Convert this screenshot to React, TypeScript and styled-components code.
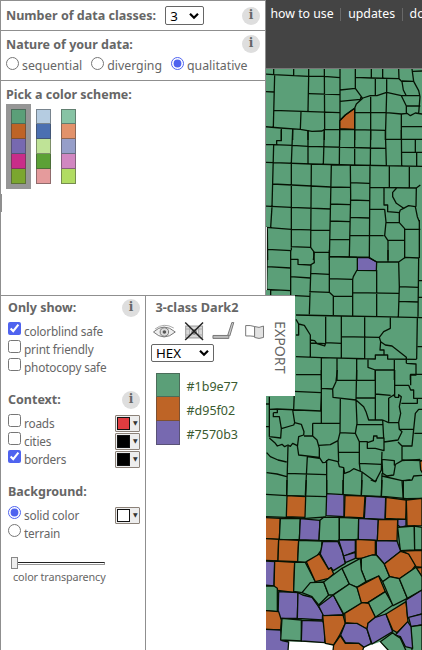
import React from "react";
import styled, { createGlobalStyle } from "styled-components";

const Global = createGlobalStyle`
  * { box-sizing: border-box; }
  body { margin: 0; background: #fff; overflow: hidden; }
`;

const Page = styled.div`
  display: grid;
  grid-template-columns: 266px 156px;
  width: 422px;
  height: 650px;
  overflow: hidden;
  font: 13px/18px "Noto Sans", sans-serif;
  color: #666;
`;

const Sidebar = styled.div`
  display: grid;
  grid-template-columns: 266px;
  grid-template-rows: 30px 50px 215px 355px;
  width: 266px;
  position: relative;
  z-index: 1;
`;

const Panel = styled.section<{ $pad: string }>`
  border: 1px solid #8f8f8f;
  border-bottom: 0;
  background: #fff;
  padding: ${(p) => p.$pad};
`;

const Heading = styled.h2<{ $size?: number }>`
  margin: 0;
  font-size: ${(p) => p.$size ?? 12.5}px;
  line-height: 18px;
  font-weight: 700;
  white-space: nowrap;
`;

const PanelHeading = styled(Heading)`
  line-height: 20px;
`;

const Bar = styled.div<{ $h?: number }>`
  display: flex;
  align-items: center;
  justify-content: space-between;
  height: ${(p) => p.$h ?? 18}px;
`;

const HeadingBar = styled(Bar)`
  align-items: flex-start;
`;

const Inline = styled.div`
  display: flex;
  align-items: center;
  gap: 9px;
`;

const Info = styled.span`
  flex: none;
  width: 18px;
  height: 18px;
  border-radius: 50%;
  background: #dedede;
  color: #666;
  font: bold 12px/17px "DejaVu Serif", serif;
  text-align: center;
`;

const SelectBox = styled.div<{ $w: number; $h: number }>`
  display: flex;
  align-items: center;
  justify-content: space-between;
  width: ${(p) => p.$w}px;
  height: ${(p) => p.$h}px;
  padding: 0 3px 0 4px;
  border: 1px solid #666;
  border-radius: 2px;
  background: #fff;
  color: #000;
  font-size: 13.3px;
`;

const Option = styled.label<{ $mr?: number }>`
  display: flex;
  align-items: flex-start;
  gap: 3px;
  height: 18px;
  margin-right: ${(p) => p.$mr ?? 0}px;
  white-space: nowrap;
`;

const Control = styled.input`
  flex: none;
  width: 13px;
  height: 13px;
  margin: 0;
  accent-color: #4f63ef;
`;

const OptionText = styled.span`
  font-size: 11.8px;
  line-height: 18px;
  letter-spacing: -0.18px;
`;

const NatureText = styled.span`
  font-size: 12.3px;
  line-height: 18px;
`;

const Natures = styled.div`
  display: flex;
  margin-top: 4px;
`;

const Ramps = styled.div`
  display: flex;
  margin-top: -1px;
`;

const Ramp = styled.div<{ $selected?: boolean }>`
  width: 25px;
  height: 85px;
  padding: 5px;
  background: ${(p) => (p.$selected ? "#969696" : "transparent")};
`;

const Swatch = styled.div<{ $c: string; $w: number; $h: number }>`
  width: ${(p) => p.$w}px;
  height: ${(p) => p.$h}px;
  background: ${(p) => p.$c};
  border: 1px solid rgba(60, 60, 60, 0.5);
  & + & { border-top: 0; }
`;

const Lower = styled.div`
  display: grid;
  grid-template-columns: 145px 121px;
  border-top: 1px solid #8f8f8f;
`;

const Options = styled.div`
  background: #fff;
  border-left: 1px solid #8f8f8f;
  padding: 3px 5px 0 7px;
  ${Heading} { line-height: 17px; padding-bottom: 1px; }
`;

const Group = styled.div<{ $top: number }>`
  padding-top: ${(p) => p.$top}px;
`;

const Picker = styled.span`
  display: flex;
  align-items: center;
  gap: 3px;
  width: 25px;
  height: 17px;
  padding-left: 1px;
  border: 1px solid #8b8178;
  border-radius: 1px;
  background: #ededed;
  color: #333;
  font: 6px/14px "DejaVu Sans", sans-serif;
`;

const PickerColor = styled.span<{ $c: string }>`
  width: 13px;
  height: 13px;
  border: 1px solid #111;
  background: ${(p) => p.$c};
`;

const Slider = styled.div`
  display: flex;
  align-items: center;
  width: 94px;
  height: 12px;
  margin: 15px 0 0 3px;
`;
const Thumb = styled.span`
  width: 7px;
  height: 12px;
  border: 1px solid #888;
  background: #eee;
`;
const Track = styled.span`
  flex: 1;
  height: 3px;
  border: 1px solid #999;
  border-top-color: #222;
  border-left: 0;
`;
const Caption = styled.div`
  margin: 0 0 0 5px;
  font-size: 10.8px;
  letter-spacing: -0.12px;
  line-height: 16px;
  white-space: nowrap;
`;

const Scheme = styled.div`
  position: relative;
  background: #fff;
  border-left: 1px solid #8f8f8f;
  padding: 2px 0 0 5px;
`;

const SchemeTitle = styled(Heading)`
  padding-left: 4.5px;
`;

const Tools = styled.div`
  display: flex;
  align-items: center;
  height: 26px;
  margin-top: 2px;
`;

const Codes = styled.div`
  display: grid;
  grid-template-columns: 24px 1fr;
  column-gap: 6.5px;
  margin: 11px 0 0 5px;
  color: #3b5b31;
  font-size: 12.5px;
  line-height: 24px;
`;
const SwatchColumn = styled.div``;
const CodeColumn = styled.div`
  padding-top: 2px;
`;

const ExportTab = styled.div`
  position: absolute;
  left: 119px;
  top: -1px;
  display: flex;
  align-items: center;
  justify-content: center;
  width: 30px;
  height: 101px;
  padding-top: 2px;
  background: #fff;
  border-top: 1px solid #8f8f8f;
`;
const ExportText = styled.span`
  writing-mode: vertical-rl;
  font-size: 14.2px;
  line-height: 18px;
`;

const Edge = styled.span`
  position: absolute;
  left: 0;
  top: 194px;
  width: 2px;
  height: 18px;
  background: #8f8f8f;
`;

const Main = styled.div`
  display: grid;
  grid-template-rows: 69px 581px;
  min-width: 0;
`;

const Nav = styled.nav`
  display: flex;
  align-items: flex-start;
  padding: 4px 0 0 4.5px;
  background: #444;
  border-bottom: 1px solid #777;
  color: #fff;
  overflow: hidden;
`;
const NavItem = styled.span`
  flex: none;
  font-size: 12.3px;
  line-height: 20px;
  padding-right: 7.5px;
  margin-right: 7px;
  background: linear-gradient(#686868, #686868) right 4px / 1px 13px no-repeat;
`;

const MapView = styled.svg`
  display: block;
  width: 156px;
  height: 581px;
`;

const Chevron = () => (
  <svg width="12" height="8" viewBox="0 0 12 8">
    <path d="M2 1.8 6 5.8 10 1.8" fill="none" stroke="#000" strokeWidth="2.2" />
  </svg>
);

const G = "#5b9f78";
const O = "#be6426";
const P = "#7769b0";

const topLines =
  "M10 222L35 224L140 229H187L234 233M35 207V224M95 207V226M140 207V229M187 207L188 390M234 207V362M38 224L34 382M10 275L36 276M140 229L138 333M141 281L234 284M34 331L233 338M117 335L115 388M10 380L55 384L115 388L150 394L180 393L188 388L278 389L370 391M280 207V265M280 232L328 234L410 236M328 207V232M362 207V234M340 235V286M374 236V278M410 207L411 236L420 245L424 270L432 286M420 243L455 244M450 207L455 244L470 272L474 290L470 340M453 214L480 213M234 270L280 265L298 290L302 296M234 304L295 298L297 291M233 362L250 345L278 325L283 312L303 294L325 287H345L374 277L418 287L433 318V340M418 287H472M433 318H475M374 338L418 342L435 340L445 347L460 339L480 342M278 325V389M326 290V391M374 278L370 420M278 338H374M418 342V420M420 380H480M58 385V420M92 388V420M138 392V420M187 388V420M233 362V420M278 389V420M326 391V420";
const upperLines =
  "M58 0V32H44V44M10 44H35L92 46L138 49L326 54L372 55M92 0L88 100M138 0V102M187 0L184 103M233 0L232 103M278 0V105M326 0L325 105M370 0L373 106M10 97L35 98L148 102L265 105L480 109M35 44L30 230L26 293M88 100V360M148 102L146 352M208 104L202 390M265 105L266 200L262 380M324 105L322 385M382 107V172M442 109V172M32 162L206 171L265 172M265 158L322 160M322 172L463 174L475 165M10 228L88 232L206 237M205 222L265 224M265 210L322 212M205 273L264 275M264 262L322 264M10 292L88 298L204 301M202 328L262 329M262 316L365 317M322 238H368M366 174V225H377V245L412 248L415 240L425 235M404 174L392 187V200L403 220L425 235L430 232L440 227L460 230L466 260L472 275M463 174L462 230M368 238L372 276L368 317L378 332V390M372 278H412L428 296V385M412 248V278M428 298H475M378 331H428M472 270V384M372 28H480M418 0L419 107M460 29V67M418 67H480M464 67V107M16 293L17 390M16 358L88 362M86 350L146 352L157 367L154 390M157 367H202M202 380L285 382";
const middleLines =
  "M16 0L14 118M16 50L86 54M86 0V136M86 28H108V43L145 45L157 38L155 5M147 45L142 193M86 80L145 84M145 70L202 73M202 0V125M202 19L320 22L344 36H410L430 22L472 24M202 86L272 88L274 80L285 60M10 118L86 122V136L142 139M142 125L202 127L214 138V195M214 139H272M272 88V197M272 128L410 130M344 60V198M410 36L412 110L409 200M412 110L470 112M409 154L470 156M470 24L468 200M378 0V34M470 92H480M470 142H480M26 120V140M102 195L240 198L350 200L480 203M102 208L110 222L127 226L145 255V320M110 222V255H102M145 270L158 272L165 281L188 288L191 280V197M191 278L238 280M145 279L190 281M238 198V325M238 260L352 262M308 200V325M385 200V235L365 245L352 262L356 275L370 285L390 288L433 322V340M356 275L354 300H366V314M466 203L464 327M467 290H480M102 320L178 323L340 327V315H377V327L464 328M178 323V390M225 325V390M284 327V390M318 327V352L340 360H397M340 360V390M397 330V390M433 340L462 342V375H445V390M102 374H178";
const lowerLines =
  "M178 0V160M178 55L212 57L222 35L226 0M222 31H340M284 0L282 90M212 57L213 82L282 90L305 110L312 125L320 150H362M282 84H340M340 0V150M340 72L386 76M95 64L178 68M97 68L95 118M22 80V200M22 118L45 117L176 123L178 68M34 128H46V117M34 128V140H52L58 176L95 165L98 158L92 120M10 102H22M10 170H20M98 158L118 163L126 185L125 195L110 200L106 232M58 176L56 204L22 200M152 160H235M152 160V198H126M235 84L234 188L280 190L285 160L282 90M285 163L362 164M170 226L205 224L228 212L234 188M280 190L292 215V280L295 305M22 204L40 220L46 228L60 223L68 230L78 225L85 229L92 220L106 227M152 198L165 210L172 235V262L110 255L106 227M172 262L182 278L190 277L200 268L228 275L232 290L245 293L248 310L262 305L275 296L300 306L340 335L358 300L360 245M228 212L230 275M228 247H292M292 215H316V235H340L366 242V204H345V198H335L334 212L316 218M362 150L365 204M362 150L380 158L410 157L412 178L420 185L408 210L366 216M292 280L358 283M380 155V85L395 75L400 82L410 82V74L418 80L412 110L416 130L410 157M398 0V80M398 46H440L446 60H455V85H466V100H418M446 13V46M445 13H480M466 85H480M412 178H455L460 130L470 118H480M455 178L450 228H420L408 216M420 230V270M360 268L397 272V285L420 272L475 268M360 268L362 310L375 318L395 315L400 285M457 190H480M14 248L25 260L48 270L74 276M78 228L74 375M14 308L45 312L74 320M74 310L194 314M136 260L130 375M136 260L172 265M194 270V372M245 293L243 375M300 306L298 378M360 310L358 382M360 318L420 332L424 385M420 332L450 330L455 318L480 316M422 270L480 272";
const bottomLines =
  "M10 43L75 47L194 50M10 110L73 112L131 115L192 111M75 0L74 47M133 0L131 50M194 0V45M243 0V44M300 0L298 47M360 0L358 50M424 0V53M246 44L309 48L371 50L433 56L480 55M326 0L340 5L344 0M430 2L445 0";

const parcels: [string, string][] = [
  [O, "75,47 131,50 129,112 73,110"],
  [P, "194,41 246,44 246,110 192,107"],
  [O, "249,46 309,48 305,114 247,111"],
  [P, "311,48 371,52 369,118 307,115"],
  [O, "372,52 433,60 431,118 370,115"],
  [O, "433,60 480,55 480,137 435,138"],
  [P, "407,118 432,118 432,138 415,142 407,135"],
  [O, "10,113 55,115 52,178 10,176"],
  [G, "55,115 115,116 112,179 52,178"],
  [P, "115,116 174,121 171,181 112,179"],
  [G, "174,121 185,112 232,112 232,183 171,181"],
  [G, "232,112 290,115 289,178 232,180"],
  [P, "290,115 349,119 346,181 289,178"],
  [O, "349,119 407,119 405,183 346,181"],
  [G, "407,142 457,138 458,210 415,212"],
  [G, "457,138 480,142 480,210 458,210"],
  [O, "10,176 50,178 48,243 10,241"],
  [O, "50,178 110,181 107,245 48,243"],
  [G, "110,181 180,183 178,210 160,235 130,247 107,245"],
  [P, "182,185 228,185 240,212 250,250 214,272 207,263 200,268 175,222"],
  [P, "230,180 280,180 280,215 245,228"],
  [P, "245,228 280,217 280,235 250,248"],
  [O, "282,178 340,181 340,225 325,227 300,235 282,235"],
  [P, "343,182 405,183 416,214 367,252 343,225"],
  [G, "298,235 330,225 343,225 367,252 383,290 362,305 350,288 312,305 298,270"],
  [O, "367,252 416,214 440,222 462,255 450,270 412,296 383,290"],
  [O, "420,213 480,211 480,262 462,260 440,222"],
  [O, "462,264 480,262 480,290"],
  [P, "10,243 38,245 36,318 10,315"],
  [O, "38,243 98,247 95,337 36,330"],
  [G, "98,247 130,247 160,305 140,322 120,338 95,334"],
  [O, "133,245 172,222 200,268 207,263 215,282 200,295 160,305"],
  [G, "10,318 36,318 46,325 46,395 10,392"],
  [P, "50,335 108,338 106,415 48,415"],
  [P, "108,338 122,345 150,352 168,378 182,400 181,420 106,415"],
  [G, "120,338 145,308 185,306 200,345 170,375 150,350"],
  [G, "185,306 240,265 262,312 212,345 200,345"],
  [G, "240,265 295,235 298,270 312,305 285,322 262,312"],
  [P, "170,378 214,345 245,405 185,408"],
  [G, "214,345 262,312 285,322 300,370 245,402"],
  [O, "285,322 350,288 370,335 318,368 298,368"],
  [G, "318,368 370,335 393,375 340,412"],
  [G, "362,305 383,290 412,296 436,355 393,377"],
  [G, "412,296 462,262 480,290 480,330 436,355"],
  [O, "10,392 50,395 58,420 56,450 10,448"],
  [P, "10,448 56,450 60,482 80,486 78,512 10,512"],
  [G, "60,415 118,420 118,483 56,480"],
  [P, "120,421 182,423 190,440 188,488 118,483"],
  [O, "182,407 243,405 250,430 232,467 215,495 190,490"],
  [O, "248,400 300,368 320,370 340,412 318,430 315,447 285,432 250,428"],
  [P, "250,430 285,430 315,447 328,490 305,502 290,490 250,488 236,465"],
  [P, "315,447 318,430 340,412 372,402 392,455 330,492"],
  [O, "372,402 432,365 438,425 405,458 392,450"],
  [P, "432,360 480,330 480,402 445,412 437,415"],
  [P, "440,412 480,402 480,435 447,440"],
  [G, "447,440 480,435 480,512 450,512"],
  [P, "400,465 437,425 447,440 452,505 430,500 415,470"],
  [G, "355,485 392,458 400,465 415,475 432,512 380,512"],
  [O, "215,495 235,467 250,490 290,490 305,502 302,512 213,512"],
];

const CountyMap = () => (
  <MapView viewBox="266 69 156 581">
    <path d="M266 69H422V650H266Z" fill={G} />
    <g stroke="#051203" strokeWidth="3.9" fill="none" strokeLinejoin="round">
      <g transform="translate(262 0) scale(.33333)">
        <path d="M233 362L250 345L278 325V388L233 386Z" fill={O} />
        <path d={topLines} />
      </g>
      <path transform="translate(262 130) scale(.33333)" d={upperLines} />
      <g transform="translate(262 250) scale(.33333)">
        <path d="M286 23L320 22L344 36L343 62L286 61Z" fill={P} />
        <path d={middleLines} />
      </g>
      <g transform="translate(262 370) scale(.33333)">
        <path d={lowerLines} />
        <path d="M474 275L482 270V310L476 300Z" fill={O} />
      </g>
      <g transform="translate(262 480) scale(.33333)">
        <path d={bottomLines} />
        <path
          d="M78 484L188 488L215 497V514H78ZM302 503L355 485L380 514H302Z"
          fill="#fff"
          stroke="none"
        />
        {parcels.map(([fill, points]) => (
          <polygon key={points} points={points} fill={fill} />
        ))}
      </g>
    </g>
    <path d="M266.5 227V290" stroke="#ddd" strokeWidth="1" />
  </MapView>
);

const ToolIcons = () => (
  <svg width="116" height="26" viewBox="151 317 116 26" fill="none" stroke="#777">
    <path d="M153.500 331Q164 321 175.500 331Q164 341 153.500 331Z" fill="#eee" />
    <path d="M155 328Q164 321 174 327" stroke="#aaa" />
    <circle cx="164.500" cy="331" r="4.300" fill="#ddd" />
    <circle cx="164.500" cy="331" r="1.800" fill="#555" stroke="none" />
    <rect x="186" y="325" width="17" height="12" fill="#d8d8d8" stroke="#999" />
    <path d="M186 328h17M186 334h17M190 325v12M199 325v12" stroke="#aaa" />
    <circle cx="194.500" cy="331" r="3.500" fill="#888" stroke="#eee" />
    <path d="M185.500 321.500L203.500 339M203.500 321.500L185.500 339" stroke="#222" strokeWidth="1.500" />
    <path d="M213.500 334.500H229.500V337.500H213.500Z" fill="#bbb" />
    <path d="M228.500 334L232.500 321.500H234.500L230.500 335Z" fill="#ccc" />
    <path d="M246.500 324.500H251L255.500 325.500V335.500L251 335H246.500Z" fill="#fff" />
    <path d="M255.500 325.500Q260 327.500 264.500 325V336.500Q260 338.500 255.500 336.500Z" fill="#e2e2e2" />
  </svg>
);

const ramps = [
  ["#5b9f78", "#be6426", "#7769b0", "#c92d89", "#7ba62f"],
  ["#b5cce1", "#4b70b1", "#bfe397", "#5ca136", "#e59b9c"],
  ["#87c3a4", "#e2926b", "#969ec9", "#d187c1", "#b1dc62"],
];

export default function App() {
  return (
    <Page>
      <Global />
      <Sidebar>
        <Edge />
        <Panel $pad="5px 5px 0">
          <Bar $h={19}>
            <Inline>
              <Heading $size={12.55}>Number of data classes:</Heading>
              <SelectBox $w={39} $h={19}>3<Chevron /></SelectBox>
            </Inline>
            <Info>i</Info>
          </Bar>
        </Panel>
        <Panel $pad="4px 5px 0">
          <HeadingBar><PanelHeading>Nature of your data:</PanelHeading><Info>i</Info></HeadingBar>
          <Natures>
            {["sequential", "diverging", "qualitative"].map((label, i) => (
              <Option key={label} $mr={9}>
                <Control type="radio" name="nature" defaultChecked={i === 2} />
                <NatureText>{label}</NatureText>
              </Option>
            ))}
          </Natures>
        </Panel>
        <Panel $pad="4px 5px 0">
          <PanelHeading>Pick a color scheme:</PanelHeading>
          <Ramps>
            {ramps.map((colors, i) => (
              <Ramp key={i} $selected={i === 0}>
                {colors.map((c) => <Swatch key={c} $c={c} $w={15} $h={15} />)}
              </Ramp>
            ))}
          </Ramps>
        </Panel>
        <Lower>
          <Options>
            <Bar><Heading>Only show:</Heading><Info>i</Info></Bar>
            <Group $top={5}>
              {["colorblind safe", "print friendly", "photocopy safe"].map((label, i) => (
                <Option key={label}>
                  <Control type="checkbox" defaultChecked={i === 0} />
                  <OptionText>{label}</OptionText>
                </Option>
              ))}
            </Group>
            <Group $top={15}>
              <Bar><Heading>Context:</Heading><Info>i</Info></Bar>
            </Group>
            <Group $top={5}>
              {["roads", "cities", "borders"].map((label, i) => (
                <Bar key={label}>
                  <Option>
                    <Control type="checkbox" defaultChecked={i === 2} />
                    <OptionText>{label}</OptionText>
                  </Option>
                  <Picker><PickerColor $c={i ? "#000" : "#df3c40"} />▼</Picker>
                </Bar>
              ))}
            </Group>
            <Group $top={15}><Heading>Background:</Heading></Group>
            <Group $top={5}>
              <Bar>
                <Option>
                  <Control type="radio" name="background" defaultChecked />
                  <OptionText>solid color</OptionText>
                </Option>
                <Picker><PickerColor $c="#fff" />▼</Picker>
              </Bar>
              <Option>
                <Control type="radio" name="background" />
                <OptionText>terrain</OptionText>
              </Option>
            </Group>
            <Slider><Thumb /><Track /></Slider>
            <Caption>color transparency</Caption>
          </Options>
          <Scheme>
            <SchemeTitle $size={12.7}>3-class Dark2</SchemeTitle>
            <Tools><ToolIcons /></Tools>
            <SelectBox $w={63} $h={18}>HEX<Chevron /></SelectBox>
            <Codes>
              <SwatchColumn>
                {[G, O, P].map((c) => <Swatch key={c} $c={c} $w={24} $h={24} />)}
              </SwatchColumn>
              <CodeColumn>
                <div>#1b9e77</div>
                <div>#d95f02</div>
                <div>#7570b3</div>
              </CodeColumn>
            </Codes>
            <ExportTab><ExportText>EXPORT</ExportText></ExportTab>
          </Scheme>
        </Lower>
      </Sidebar>
      <Main>
        <Nav>
          <NavItem>how to use</NavItem>
          <NavItem>updates</NavItem>
          <NavItem>downloads</NavItem>
        </Nav>
        <CountyMap />
      </Main>
    </Page>
  );
}
